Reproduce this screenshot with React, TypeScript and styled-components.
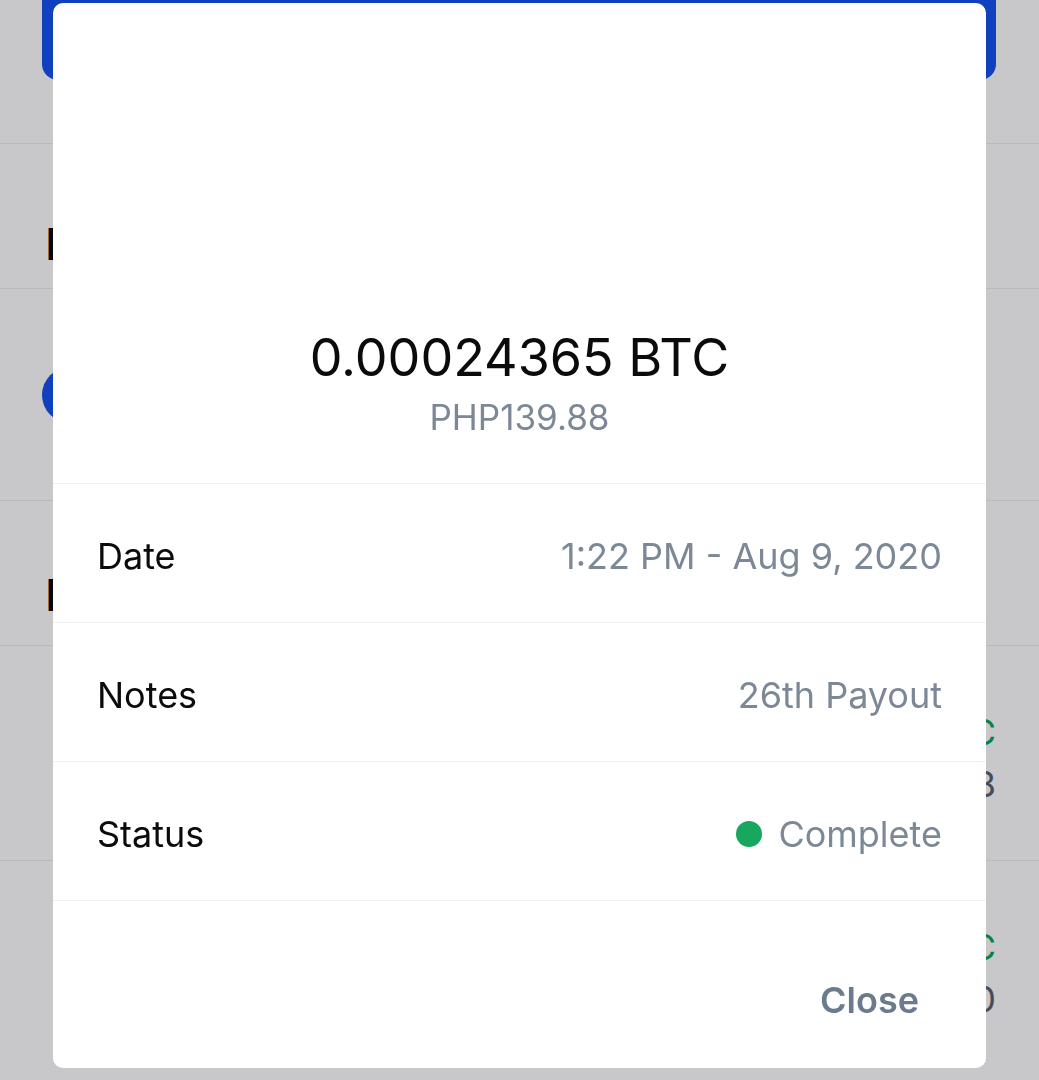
import React from "react";
import styled, { createGlobalStyle } from "styled-components";

const GlobalStyle = createGlobalStyle`
    html, body {
        margin: 0;
        padding: 0;
        height: 1080px;
        overflow: hidden;
        background: #ffffff;
        font-family: Inter, "Noto Sans", "Liberation Sans", sans-serif;
        -webkit-font-smoothing: antialiased;
    }
`;

const details = [
    { label: "Date", value: "1:22 PM - Aug 9, 2020" },
    { label: "Notes", value: "26th Payout" },
    { label: "Status", value: "Complete", status: true },
];

const transactions = [
    { amount: "+0.00024365 BTC", fiat: "+PHP139.88" },
    { amount: "+0.00024120 BTC", fiat: "+PHP138.50" },
];

export default function App() {
    return (
        <>
            <GlobalStyle />
            <StyledPage>
                <StyledTopButton aria-label="Buy / Sell" />
                <StyledSpacer />
                <StyledSection $height={145}>
                    <StyledHeading $top={78}>Price</StyledHeading>
                </StyledSection>
                <StyledSection $height={212}>
                    <StyledWalletRow>
                        <StyledCoin />
                    </StyledWalletRow>
                </StyledSection>
                <StyledSection $height={145}>
                    <StyledHeading $top={72}>History</StyledHeading>
                </StyledSection>
                {transactions.map((t, i) => (
                    <StyledSection key={i} $height={215}>
                        <StyledTxRow>
                            <span className="txAmount">{t.amount}</span>
                            <span className="txFiat">{t.fiat}</span>
                        </StyledTxRow>
                    </StyledSection>
                ))}
            </StyledPage>

            <StyledOverlay>
                <StyledModal>
                    <StyledModalHeader>
                        <span className="amount">0.00024365 BTC</span>
                        <span className="fiat">PHP139.88</span>
                    </StyledModalHeader>
                    {details.map((d) => (
                        <StyledDetailRow key={d.label}>
                            <span className="label">{d.label}</span>
                            <span className="value">
                                {d.status && <StyledDot />}
                                {d.value}
                            </span>
                        </StyledDetailRow>
                    ))}
                    <StyledModalFooter>
                        <StyledCloseButton>Close</StyledCloseButton>
                    </StyledModalFooter>
                </StyledModal>
            </StyledOverlay>
        </>
    );
}

const StyledPage = styled.div`
    display: flex;
    flex-flow: column nowrap;
    width: 100%;
`;

const StyledTopButton = styled.button`
    margin: 0 43px 0 42px;
    height: 80px;
    border: none;
    border-radius: 0 0 16px 16px;
    background: #1652f0;
`;

const StyledSpacer = styled.div`
    height: 63px;
`;

const StyledSection = styled.div<{ $height: number }>`
    height: ${({ $height }) => $height}px;
    border-top: 1px solid #eceef1;
    box-sizing: border-box;
    padding: 0 43px 0 45px;
`;

const StyledHeading = styled.h2<{ $top: number }>`
    margin: ${({ $top }) => $top}px 0 0;
    font-size: 44px;
    font-weight: 500;
    line-height: 44px;
    color: #0a0b0d;
`;

const StyledWalletRow = styled.div`
    display: flex;
    align-items: center;
    height: 100%;
    margin-left: -3px;
`;

const StyledCoin = styled.div`
    width: 56px;
    height: 56px;
    border-radius: 50%;
    background: #1652f0;
`;

const StyledTxRow = styled.div`
    display: flex;
    flex-flow: column nowrap;
    justify-content: center;
    align-items: flex-end;
    gap: 8px;
    height: 100%;
    padding-top: 10px;
    box-sizing: border-box;
    font-size: 36px;
    .txAmount {
        color: #05a660;
    }
    .txFiat {
        color: #5b616e;
    }
`;

const StyledOverlay = styled.div`
    position: fixed;
    inset: 0;
    display: flex;
    padding: 3px 53px 12px;
    background: rgba(0, 2, 8, 0.215);
`;

const StyledModal = styled.div`
    flex: 1;
    display: flex;
    flex-flow: column nowrap;
    background: #ffffff;
    border-radius: 10px;
    overflow: hidden;
`;

const StyledModalHeader = styled.div`
    height: 480px;
    flex-shrink: 0;
    display: flex;
    flex-flow: column nowrap;
    justify-content: flex-end;
    align-items: center;
    gap: 7px;
    padding-bottom: 44px;
    box-sizing: border-box;
    .amount {
        font-size: 52px;
        line-height: 60px;
        color: #0a0b0d;
    }
    .fiat {
        font-size: 35px;
        line-height: 44px;
        color: #7d8896;
    }
`;

const StyledDetailRow = styled.div`
    height: 139px;
    flex-shrink: 0;
    box-sizing: border-box;
    border-top: 1px solid #eef0f2;
    display: flex;
    justify-content: space-between;
    align-items: center;
    padding: 6px 44px 0;
    font-size: 36px;
    .label {
        color: #0a0b0d;
    }
    .value {
        display: flex;
        align-items: center;
        gap: 16px;
        color: #7d8896;
    }
`;

const StyledDot = styled.span`
    width: 26px;
    height: 26px;
    border-radius: 50%;
    background: #17a75e;
`;

const StyledModalFooter = styled.div`
    flex: 1;
    border-top: 1px solid #eef0f2;
    display: flex;
    justify-content: flex-end;
    align-items: flex-end;
    padding: 0 67px 48px;
`;

const StyledCloseButton = styled.button`
    border: none;
    background: none;
    padding: 0;
    font-family: inherit;
    font-size: 36px;
    line-height: 40px;
    font-weight: 600;
    color: #6b7a8c;
`;
